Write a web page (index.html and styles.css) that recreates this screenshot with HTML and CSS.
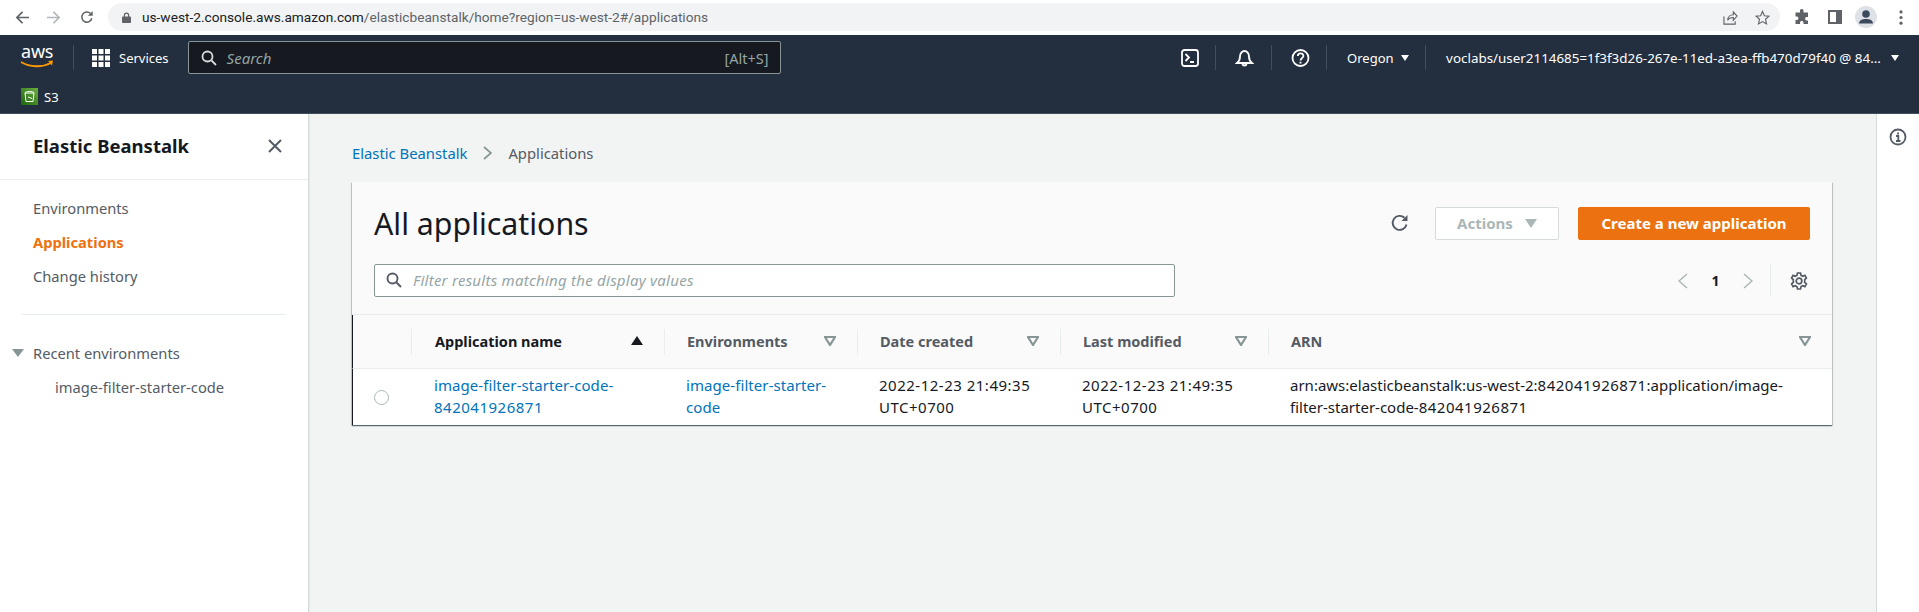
FILE: index.html
```html
<!DOCTYPE html>
<html lang="en">
<head>
<meta charset="utf-8">
<title>Elastic Beanstalk</title>
<link rel="stylesheet" href="styles.css">
</head>
<body>
<header class="chrome">
  <svg class="ch-ic back" viewBox="0 0 16 16"><path d="M15 8H2M8 2L2 8l6 6"/></svg>
  <svg class="ch-ic fwd" viewBox="0 0 16 16"><path d="M1 8h13M8 2l6 6-6 6"/></svg>
  <svg class="ch-ic reload" viewBox="0 0 16 16"><path d="M13.5 9.5A5.8 5.8 0 1 1 12 4"/><path class="fill" d="M14.5 1v5.5H9z"/></svg>
  <div class="omni">
    <svg class="lock" viewBox="0 0 10 12"><path d="M2 5V3.5a3 3 0 0 1 6 0V5h1a1 1 0 0 1 1 1v5a1 1 0 0 1-1 1H1a1 1 0 0 1-1-1V6a1 1 0 0 1 1-1zm1.3 0h3.4V3.5a1.7 1.7 0 0 0-3.4 0z"/></svg>
    <span class="url"><b>us-west-2.console.aws.amazon.com</b>/elasticbeanstalk/home?region=us-west-2#/applications</span>
    <svg class="ch-small share" viewBox="0 0 16 16"><path d="M1 7v8h12v-3M5 11c0-4 3-6 6-6V2l4 4.500-4 4.500V8c-3 0-5 1-6 3z"/></svg>
    <svg class="ch-small star" viewBox="0 0 16 16"><path d="M8 1.500l2 4.600 5 .5-3.800 3.300 1.100 4.900L8 12.300l-4.300 2.500 1.100-4.900L1 6.600l5-.5z"/></svg>
  </div>
  <svg class="ch-fill puzzle" viewBox="0 0 16 16"><path d="M6 1.500a1.800 1.800 0 0 1 3.500 0V3.500h4.500V8h-1.500a1.800 1.800 0 0 0 0 3.500H14V15H9.500v-1.500a1.800 1.800 0 0 0-3.500 0V15H1.500v-4H3a1.800 1.800 0 0 0 0-3.500H1.500v-4H6z"/></svg>
  <svg class="ch-fill panel" viewBox="0 0 14 14"><path fill-rule="evenodd" d="M0 0h14v14H0zm2 2v10h6V2z"/></svg>
  <span class="avatar"><svg viewBox="0 0 22 22"><circle cx="11" cy="8" r="3.800"/><path d="M4 17.500c0-3.200 3.200-4.500 7-4.500s7 1.300 7 4.500z"/></svg></span>
  <svg class="ch-fill dots" viewBox="0 0 4 16"><circle cx="2" cy="2" r="1.700"/><circle cx="2" cy="8" r="1.700"/><circle cx="2" cy="14" r="1.700"/></svg>
</header>

<nav class="nav">
  <div class="nav-top">
    <div class="aws">
      <span class="aws-t">aws</span>
      <svg class="aws-smile" viewBox="0 0 34 9">
        <path class="smile" d="M1 2c9 5.500 21 5.500 30 1"/>
        <path class="smile-h" d="M28 1l5-.5-1 5z"/>
      </svg>
    </div>
    <span class="nav-sep first"></span>
    <svg class="grid-ic" viewBox="0 0 18 18"><path d="M0 0h5v5H0zM6.500 0h5v5h-5zM13 0h5v5h-5zM0 6.500h5v5H0zM6.500 6.500h5v5h-5zM13 6.500h5v5h-5zM0 13h5v5H0zM6.500 13h5v5h-5zM13 13h5v5h-5z"/></svg>
    <span class="services">Services</span>
    <div class="search">
      <svg class="search-ic" viewBox="0 0 16 16"><circle cx="6.500" cy="6.500" r="5"/><path d="M10.500 10.500l4.500 4.500"/></svg>
      <span class="search-ph">Search</span>
      <span class="search-key">[Alt+S]</span>
    </div>
    <svg class="top-ic term" viewBox="0 0 18 18"><rect x="1" y="1" width="16" height="16" rx="2.500"/><path d="M4.500 5l3.500 3.500L4.500 12M9 13h4"/></svg>
    <span class="nav-sep"></span>
    <svg class="top-ic bell" viewBox="0 0 19 18"><path d="M2 14h15c-2-1.500-3-2.500-3-6.500a4.500 5.500 0 0 0-9 0c0 4-1 5-3 6.500z"/><path d="M7.500 14.500a2 2 0 0 0 4 0"/></svg>
    <span class="nav-sep"></span>
    <svg class="top-ic help" viewBox="0 0 19 18"><circle cx="9.500" cy="9" r="8"/><path d="M6.800 7c0-3.500 5.600-3.500 5.600 0 0 2-2.800 2-2.800 4.500M9.500 12.800v1.800"/></svg>
    <span class="nav-sep"></span>
    <span class="region">Oregon</span><i class="caret"></i>
    <span class="nav-sep"></span>
    <span class="account">voclabs/user2114685=1f3f3d26-267e-11ed-a3ea-ffb470d79f40 @ 84...</span><i class="caret caret-wide"></i>
  </div>
  <div class="nav-bottom">
    <svg class="s3" viewBox="0 0 17 17"><defs><linearGradient id="s3g" x1="0" y1="1" x2="1" y2="0"><stop offset="0" stop-color="#1b660f"/><stop offset="1" stop-color="#6cae3e"/></linearGradient></defs><rect width="17" height="17" fill="url(#s3g)"/><path d="M4 5h9l-1 8.500H5zM4 5c0-2 9-2 9 0M7 9l4 1.500" fill="none" stroke="#fff"/></svg>
    <span class="s3-t">S3</span>
  </div>
</nav>

<div class="layout">
  <aside class="side">
    <div class="side-head">
      <h2 class="side-title">Elastic Beanstalk</h2>
      <svg class="close" viewBox="0 0 14 14"><path d="M1 1l12 12M13 1L1 13"/></svg>
    </div>
    <ul class="side-list">
      <li>Environments</li>
      <li class="active">Applications</li>
      <li>Change history</li>
    </ul>
    <hr class="side-hr">
    <div class="recent"><i class="recent-tri"></i>Recent environments</div>
    <div class="recent-item">image-filter-starter-code</div>
  </aside>

  <main class="main">
    <div class="crumbs">
      <a class="link">Elastic Beanstalk</a>
      <svg class="crumb-sep" viewBox="0 0 9 14"><path d="M1 1l7 6-7 6"/></svg>
      <span class="crumb-cur">Applications</span>
    </div>
    <section class="card">
      <div class="card-head">
        <div class="head-row">
          <h1 class="title">All applications</h1>
          <svg class="refresh" viewBox="0 0 18 18"><path d="M15.500 10.500A7 7 0 1 1 13.500 3.800"/><path class="fill" d="M16.500 1v6h-6z"/></svg>
          <button class="btn btn-off">Actions<i class="btn-tri"></i></button>
          <button class="btn btn-primary">Create a new application</button>
        </div>
        <div class="tool-row">
          <div class="filter">
            <svg class="filter-ic" viewBox="0 0 16 16"><circle cx="6.500" cy="6.500" r="5"/><path d="M10.500 10.500l4.500 4.500"/></svg>
            <span class="filter-ph">Filter results matching the display values</span>
          </div>
          <div class="pager">
            <svg class="pg-arrow" viewBox="0 0 10 16"><path d="M9 1L1 8l8 7"/></svg>
            <span class="pg-num">1</span>
            <svg class="pg-arrow" viewBox="0 0 10 16"><path d="M1 1l8 7-8 7"/></svg>
          </div>
          <div class="pg-set">
            <svg class="gear" viewBox="0 0 18 18"><circle cx="9" cy="9" r="2.800"/><path d="M7.500 1h3l.5 2.300 1.700.9 2.200-.8 1.500 2.600-1.700 1.600v2.800l1.700 1.600-1.500 2.600-2.200-.8-1.700.9-.5 2.300h-3L7 14.700l-1.700-.9-2.200.8-1.500-2.600 1.700-1.600V7.600L1.600 6l1.500-2.600 2.200.8L7 3.300z"/></svg>
          </div>
        </div>
      </div>
      <div class="t-row t-head">
        <div class="th th-radio"></div>
        <div class="th sorted"><span>Application name</span><i class="sort-up"></i></div>
        <div class="th"><span>Environments</span><svg class="sort-ic" viewBox="0 0 12 10"><path d="M1 1h10L6 9z"/></svg></div>
        <div class="th"><span>Date created</span><svg class="sort-ic" viewBox="0 0 12 10"><path d="M1 1h10L6 9z"/></svg></div>
        <div class="th"><span>Last modified</span><svg class="sort-ic" viewBox="0 0 12 10"><path d="M1 1h10L6 9z"/></svg></div>
        <div class="th"><span>ARN</span><svg class="sort-ic" viewBox="0 0 12 10"><path d="M1 1h10L6 9z"/></svg></div>
      </div>
      <div class="t-row t-body">
        <div class="td td-radio"><i class="radio"></i></div>
        <div class="td"><a class="link">image-filter-starter-code-<br><span class="num">842041926871</span></a></div>
        <div class="td"><a class="link">image-filter-starter-<br>code</a></div>
        <div class="td"><span class="num">2022-12-23 21:49:35</span><br><span class="num">UTC+0700</span></div>
        <div class="td"><span class="num">2022-12-23 21:49:35</span><br><span class="num">UTC+0700</span></div>
        <div class="td">arn:aws:elasticbeanstalk:us-west-2:<span class="num">842041926871</span>:application/image-<br>filter-starter-code-<span class="num">842041926871</span></div>
      </div>
    </section>
  </main>

  <aside class="rail">
    <svg class="info" viewBox="0 0 18 18"><circle cx="9" cy="9" r="7.500"/><path d="M7 8h2.300v5M7 13h4.500M9 4.500v2"/></svg>
  </aside>
</div>
</body>
</html>
```
FILE: styles.css
```css
* { box-sizing: border-box; }
html, body { margin: 0; height: 612px; overflow: hidden; }
body { font-family: "Noto Sans", "Open Sans", sans-serif; font-size: 14px; color: #16191f; background: #f2f3f3; display: flex; flex-direction: column; }

.chrome { height: 35px; flex: none; background: #fff; display: flex; align-items: center; padding: 0 16px 1px 15px; }
.chrome svg { display: block; flex: none; }
.ch-ic { width: 15px; height: 15px; fill: none; stroke: #5f6368; stroke-width: 1.800; }
.ch-ic .fill { fill: #5f6368; stroke: none; }
.fwd { margin-left: 16px; stroke: #b4b7bb; }
.reload { margin-left: 19px; width: 14px; height: 14px; }
.omni { margin-left: 14px; width: 1673px; height: 28px; border-radius: 14px; background: #f1f3f4; display: flex; align-items: center; padding: 0 10px 0 14px; }
.lock { width: 9px; height: 11px; fill: #5f6368; }
.url { margin-left: 11px; font-family: "Roboto", sans-serif; font-size: 13.680px; color: #5f6368; white-space: nowrap; flex: 1; }
.url b { font-weight: 400; color: #202124; }
.ch-small { width: 15px; height: 15px; fill: none; stroke: #5f6368; stroke-width: 1.200; }
.star { margin-left: 17px; }
.ch-fill { fill: #5f6368; }
.puzzle { width: 16px; height: 16px; margin-left: 14px; }
.panel { width: 14px; height: 14px; margin-left: 18px; }
.avatar { width: 22px; height: 22px; border-radius: 50%; background: #dee1e6; margin-left: 13px; display: block; }
.avatar svg { width: 22px; height: 22px; fill: #3c4a5e; }
.dots { width: 4px; height: 15px; margin-left: 22px; }

.nav { height: 79px; flex: none; background: #232f3e; border-bottom: 1px solid #414d5c; color: #fff; display: flex; flex-direction: column; }
.nav-top { height: 45px; display: flex; align-items: center; padding: 0 17px 0 20px; }
.nav-top svg { flex: none; display: block; }
.aws { width: 34px; height: 23px; flex: none; display: flex; flex-direction: column; }
.aws-t { display: block; height: 10px; line-height: 10px; font-size: 18px; letter-spacing: -.2px; padding-left: 1px; white-space: nowrap; }
.aws-smile { width: 34px; height: 9px; margin-top: 4px; }
.smile { fill: none; stroke: #f90; stroke-width: 1.800; }
.smile-h { fill: #f90; }
.nav-sep { width: 1px; height: 25px; background: #414d5c; flex: none; margin: 0 19px 0 16.500px; }
.nav-sep.first { margin: 0 18px 0 19px; }
.grid-ic { width: 18px; height: 18px; fill: #fff; }
.services { margin-left: 9px; font-size: 13px; white-space: nowrap; }
.search { margin-left: 19px; width: 593px; height: 33px; background: #16191f; border: 1px solid #879596; border-radius: 2px; display: flex; align-items: center; padding: 0 11px 0 12px; }
.search-ic { width: 16px; height: 16px; fill: none; stroke: #d5dbdb; stroke-width: 1.800; }
.search-ph { margin-left: 10px; font-style: italic; font-size: 15px; color: #95a5a6; flex: 1; }
.search-key { font-size: 14.500px; color: #95a5a6; }
.top-ic { fill: none; stroke: #fff; stroke-width: 1.800; height: 18px; }
.term { width: 18px; margin-left: 400px; }
.bell, .help { width: 19px; }
.region { font-size: 13px; white-space: nowrap; margin-left: 1px; }
.account { font-size: 13.400px; white-space: nowrap; margin-left: 1px; }
.caret { width: 0; height: 0; border-left: 4.500px solid transparent; border-right: 4.500px solid transparent; border-top: 6px solid #fff; margin-left: 7px; flex: none; }
.caret-wide { margin-left: 10px; }
.nav-bottom { flex: 1; display: flex; align-items: center; padding: 0 0 0 21px; }
.s3 { width: 17px; height: 17px; display: block; }
.s3-t { margin-left: 6px; font-size: 13px; }

.layout { flex: 1; display: flex; min-height: 0; }
.side { width: 309px; flex: none; background: #fff; border-right: 1px solid #d5dbdb; box-shadow: 1px 0 1px rgba(0,0,0,.04); font-size: 14.700px; }
.side-head { height: 66px; border-bottom: 1px solid #eaeded; display: flex; align-items: center; justify-content: space-between; padding: 0 26px 2px 33px; }
.side-title { margin: 0; font-size: 18.500px; font-weight: 700; }
.close { width: 14px; height: 14px; fill: none; stroke: #545b64; stroke-width: 2; display: block; }
.side-list { list-style: none; margin: 0; padding: 11px 0 0 33px; color: #545b64; }
.side-list li { height: 34px; line-height: 34px; }
.side-list .active { color: #ec7211; font-weight: 700; }
.side-hr { margin: 21px 22px 0; border: 0; border-top: 1px solid #eaeded; }
.recent { margin-top: 21px; height: 34px; line-height: 34px; color: #545b64; padding-left: 12px; display: flex; align-items: center; }
.recent-tri { width: 0; height: 0; border-left: 6px solid transparent; border-right: 6px solid transparent; border-top: 8px solid #879596; margin-right: 9px; }
.recent-item { height: 34px; line-height: 34px; padding-left: 55px; color: #545b64; }

.main { flex: 1; min-width: 0; padding: 0 44px 0 43px; }
.link { color: #0073bb; }
.crumbs { height: 68px; display: flex; align-items: center; padding: 9px 0 0 0; white-space: nowrap; font-size: 14.800px; }
.crumb-sep { width: 9px; height: 14px; margin: 0 16px; fill: none; stroke: #879596; stroke-width: 1.700; display: block; }
.crumb-cur { color: #545b64; }
.card { background: #fff; box-shadow: 0 1px 1px rgba(0,28,36,.5), 1px 1px 1px rgba(0,28,36,.15), -1px 1px 1px rgba(0,28,36,.15); }
.card-head { background: #fafafa; height: 133px; padding: 0 22px; border-bottom: 1px solid #eaeded; }
.head-row { height: 82px; display: flex; align-items: center; }
.title { margin: 0; font-size: 30.300px; font-weight: 400; flex: 1; white-space: nowrap; }
.refresh { width: 18px; height: 18px; fill: none; stroke: #545b64; stroke-width: 1.900; margin-right: 26px; display: block; }
.refresh .fill { fill: #545b64; stroke: none; }
.btn { height: 33px; font: 700 15px "Noto Sans", sans-serif; border-radius: 2px; padding: 0; display: flex; align-items: center; justify-content: center; }
.btn-off { width: 124px; background: #fff; border: 1px solid #d5dbdb; color: #aab7b8; margin-right: 19px; }
.btn-tri { width: 0; height: 0; border-left: 6px solid transparent; border-right: 6px solid transparent; border-top: 9px solid #aab7b8; margin-left: 12px; }
.btn-primary { width: 232px; background: #ec7211; border: 1px solid #ec7211; color: #fff; }
.tool-row { height: 33px; display: flex; align-items: center; padding-right: 2px; }
.filter { width: 801px; height: 33px; background: #fff; border: 1px solid #879596; border-radius: 2px; display: flex; align-items: center; padding: 0 0 1px 11px; }
.filter-ic { width: 16px; height: 16px; fill: none; stroke: #545b64; stroke-width: 1.900; display: block; }
.filter-ph { margin-left: 11px; font-style: italic; color: #95a5a6; white-space: nowrap; font-size: 15px; letter-spacing: .25px; }
.pager { margin-left: auto; display: flex; align-items: center; }
.pg-arrow { width: 10px; height: 16px; fill: none; stroke: #aab7b8; stroke-width: 1.500; display: block; }
.pg-num { width: 55px; text-align: center; font-weight: 700; font-size: 14px; }
.pg-set { margin-left: 17px; padding-left: 19px; height: 33px; border-left: 1px solid #eaeded; display: flex; align-items: center; }
.gear { width: 18px; height: 18px; fill: none; stroke: #545b64; stroke-width: 1.700; display: block; }

.t-row { display: grid; grid-template-columns: 58px 253px 193px 203px 208px 1fr; }
.t-head { height: 54px; background: #fafafa; border-left: 1px solid #16191f; border-bottom: 1px solid #eaeded; align-items: center; }
.th { height: 26px; border-left: 1px solid #eaeded; display: flex; align-items: center; justify-content: space-between; padding: 0 21px 2px 23px; font-weight: 700; font-size: 14.500px; color: #545b64; white-space: nowrap; }
.th:nth-child(n+3) { padding-left: 22px; }
.th-radio { border-left: 0; }
.sorted { color: #16191f; }
.sort-up { width: 0; height: 0; border-left: 6px solid transparent; border-right: 6px solid transparent; border-bottom: 9px solid #16191f; margin-right: 0; }
.sort-ic { width: 12px; height: 10px; fill: none; stroke: #879596; stroke-width: 2.200; display: block; }
.t-body { height: 56px; border-left: 1px solid #16191f; align-items: center; }
.td { padding: 0 0 2px 23px; line-height: 22px; white-space: nowrap; font-size: 15px; }
.td:nth-child(n+3) { padding-left: 22px; }
.td .link { letter-spacing: .07px; }
.num { letter-spacing: .5px; }
.td-radio { padding: 0 0 0 21px; }
.radio { display: block; width: 15px; height: 15px; border: 1px solid #aab7b8; border-radius: 50%; background: #fff; }

.rail { width: 43px; flex: none; background: #fff; border-left: 1px solid #d5dbdb; display: flex; justify-content: center; padding-top: 14px; }
.info { width: 18px; height: 18px; fill: none; stroke: #545b64; stroke-width: 1.800; display: block; }
```
